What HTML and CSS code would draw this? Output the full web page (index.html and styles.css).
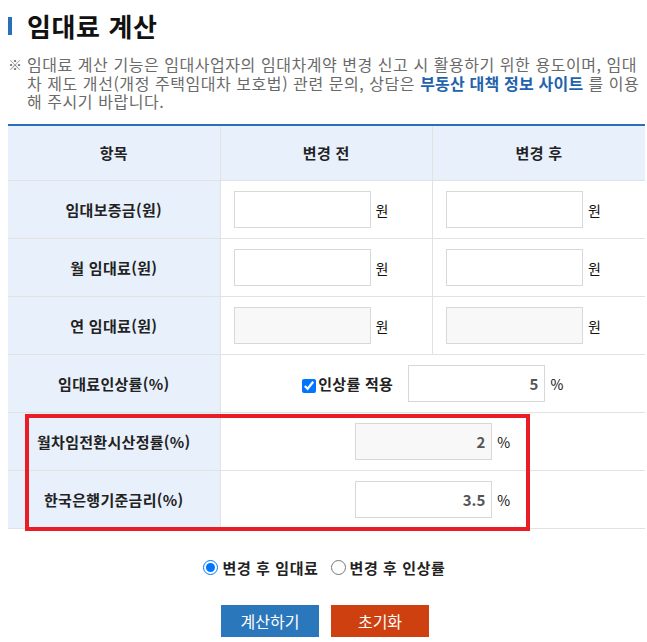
FILE: index.html
```html
<!DOCTYPE html>
<html lang="ko">
<head>
  <meta charset="UTF-8">
  <title>임대료 계산</title>
  <link rel="stylesheet" href="styles.css">
</head>
<body>
  <div class="page">
    <h1 class="title">임대료 계산</h1>

    <p class="note">
      <span class="note-mark">※</span>
      <span class="note-text">임대료 계산 기능은 임대사업자의 임대차계약 변경 신고 시 활용하기 위한 용도이며, 임대차 제도 개선(개정 주택임대차 보호법) 관련 문의, 상담은 <b class="note-link">부동산 대책 정보 사이트</b> 를 이용해 주시기 바랍니다.</span>
    </p>

    <div class="calc">
      <table class="calc-table">
        <colgroup>
          <col class="col-label">
          <col class="col-value">
          <col class="col-value">
        </colgroup>
        <thead>
          <tr>
            <th>항목</th>
            <th>변경 전</th>
            <th>변경 후</th>
          </tr>
        </thead>
        <tbody>
          <tr>
            <th>임대보증금(원)</th>
            <td><input class="field" type="text"><span class="unit">원</span></td>
            <td><input class="field" type="text"><span class="unit">원</span></td>
          </tr>
          <tr>
            <th>월 임대료(원)</th>
            <td><input class="field" type="text"><span class="unit">원</span></td>
            <td><input class="field" type="text"><span class="unit">원</span></td>
          </tr>
          <tr>
            <th>연 임대료(원)</th>
            <td><input class="field field-readonly" type="text" readonly><span class="unit">원</span></td>
            <td><input class="field field-readonly" type="text" readonly><span class="unit">원</span></td>
          </tr>
          <tr>
            <th>임대료인상률(%)</th>
            <td colspan="2" class="cell-center">
              <label class="check"><input type="checkbox" checked>인상률 적용</label>
              <input class="field" type="text" value="5"><span class="unit">%</span>
            </td>
          </tr>
          <tr>
            <th>월차임전환시산정률(%)</th>
            <td colspan="2" class="cell-center">
              <input class="field field-readonly" type="text" value="2" readonly><span class="unit">%</span>
            </td>
          </tr>
          <tr>
            <th>한국은행기준금리(%)</th>
            <td colspan="2" class="cell-center">
              <input class="field" type="text" value="3.5"><span class="unit">%</span>
            </td>
          </tr>
        </tbody>
      </table>
      <div class="highlight"></div>
    </div>

    <div class="options">
      <label class="radio"><input type="radio" name="mode" checked>변경 후 임대료</label>
      <label class="radio"><input type="radio" name="mode">변경 후 인상률</label>
    </div>

    <div class="actions">
      <button class="btn btn-calc" type="button">계산하기</button>
      <button class="btn btn-reset" type="button">초기화</button>
    </div>
  </div>
</body>
</html>
```

FILE: styles.css
```css
/* Base */
body {
  margin: 0;
  background: #fff;
  color: #222;
  font-family: "Noto Sans CJK KR", "Noto Sans", sans-serif;
}

.page {
  padding: 0 0 0 8px;
  width: 637px;
}

/* Title */
.title {
  margin: 0;
  padding: 9px 0 0 19px;
  height: 34px;
  position: relative;
  font-size: 26px;
  line-height: 34px;
  font-weight: 700;
  color: #111;
  letter-spacing: 0.6px;
}

.title::before {
  content: "";
  position: absolute;
  left: 0;
  top: 17px;
  width: 4px;
  height: 18px;
  background: #2b6fb6;
}

/* Notice */
.note {
  display: flex;
  margin: 12px 0 0;
  padding: 0 2px 0 0;
  font-size: 16px;
  line-height: 18.5px;
  color: #6a6a6a;
  letter-spacing: 0.55px;
}

.note-mark {
  flex: 0 0 19px;
  font-size: 14px;
  letter-spacing: 0;
}

.note-text {
  word-break: break-all;
}

.note-link {
  color: #1f63ad;
  letter-spacing: 0.2px;
}

/* Table */
.calc {
  position: relative;
  margin-top: 13px;
}

.calc-table {
  width: 637px;
  border-collapse: collapse;
  table-layout: fixed;
  border-top: 2px solid #2b6fb6;
  font-size: 15px;
}

.col-label {
  width: 212px;
}

.calc-table th,
.calc-table td {
  border: 1px solid #e2e2e2;
  height: 58px;
  padding: 0;
  box-sizing: border-box;
}

.calc-table tr > :first-child {
  border-left: none;
}

.calc-table tr > :last-child {
  border-right: none;
}

.calc-table th {
  background: #e8f0fb;
  font-weight: 700;
  color: #222;
  letter-spacing: 0.3px;
}

.calc-table thead th {
  height: 56px;
  border-top: none;
}

.calc-table td {
  padding-left: 13px;
  white-space: nowrap;
}

.calc-table .cell-center {
  padding-left: 0;
  text-align: center;
}

.field {
  width: 137px;
  height: 37px;
  box-sizing: border-box;
  border: 1px solid #d8d8d8;
  background: #fff;
  padding: 0 6px;
  vertical-align: middle;
  text-align: right;
  font-family: inherit;
  font-size: 15px;
  font-weight: 700;
  color: #555;
}

.field-readonly {
  background: #f8f8f8;
}

.unit {
  display: inline-block;
  margin-left: 5px;
  vertical-align: middle;
  font-size: 14px;
  color: #111;
}

.check {
  display: inline-flex;
  align-items: center;
  margin-right: 11px;
  vertical-align: middle;
  font-weight: 700;
  color: #222;
  letter-spacing: 0.3px;
}

.check input {
  margin: 4px 2px 0 0;
  width: 14px;
  height: 14px;
}

/* Red annotation box */
.highlight {
  position: absolute;
  left: 17px;
  top: 290px;
  width: 505px;
  height: 117px;
  box-sizing: border-box;
  border: 4px solid #e81d25;
  pointer-events: none;
}

/* Options */
.options {
  display: flex;
  justify-content: center;
  gap: 12px;
  margin-top: 28px;
  padding-right: 4px;
  font-size: 15px;
  font-weight: 700;
  color: #222;
  letter-spacing: 0.6px;
}

.radio {
  display: inline-flex;
  align-items: center;
}

.radio input {
  margin: 0 4px 0 0;
  width: 15px;
  height: 15px;
}

/* Buttons */
.actions {
  display: flex;
  justify-content: center;
  gap: 12px;
  margin-top: 27px;
  padding-right: 3px;
}

.btn {
  width: 98px;
  height: 32px;
  border: none;
  color: #fff;
  font-family: inherit;
  font-size: 16px;
}

.btn-calc {
  background: #2b77bb;
}

.btn-reset {
  background: #cf4010;
}
```
